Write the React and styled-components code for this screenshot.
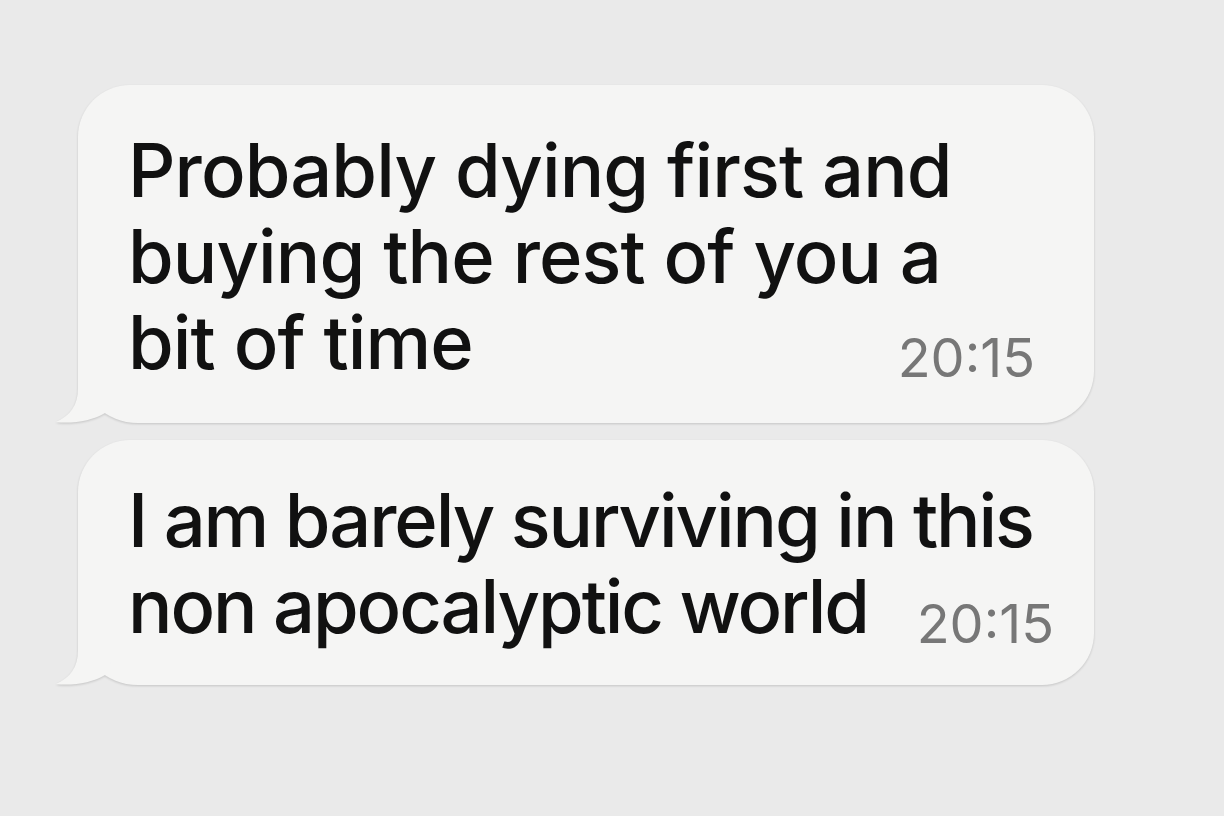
import React from "react";
import styled, { createGlobalStyle } from "styled-components";

const Global = createGlobalStyle`
  html, body { margin: 0; padding: 0; background: #eaeaea; }
  body { font-family: Inter, "Noto Sans", sans-serif; }
`;

const Page = styled.main`
  width: 1224px;
  height: 816px;
  box-sizing: border-box;
  padding: 85px 0 0 78px;
  display: flex;
  flex-direction: column;
  gap: 17px;
  background: #eaeaea;
  overflow: hidden;
`;

const BUBBLE = "#f5f5f4";

const Bubble = styled.div`
  position: relative;
  width: 1016px;
  box-sizing: border-box;
  padding: ${(p) => p.$pt}px 30px ${(p) => p.$pb}px 50px;
  background: ${BUBBLE};
  border-radius: 52px 52px 52px 60px;
  display: grid;
  filter: drop-shadow(0 1px 1px rgba(0, 0, 0, 0.16));
`;

const Text = styled.p`
  grid-area: 1 / 1;
  margin: 0;
  font-size: 74px;
  font-weight: 500;
  line-height: 86px;
  color: #111;
  letter-spacing: ${(p) => p.$tracking}px;
  white-space: nowrap;
`;

const Time = styled.span`
  grid-area: 1 / 1;
  justify-self: end;
  align-self: end;
  margin-right: ${(p) => p.$mr}px;
  margin-bottom: ${(p) => p.$mb}px;
  font-size: 54px;
  line-height: 54px;
  color: #777;
`;

const TailSvg = styled.svg`
  position: absolute;
  left: -22px;
  bottom: 0;
  width: 60px;
  height: 64px;
  overflow: visible;
`;

const Tail = () => (
  <TailSvg viewBox="0 0 60 64">
    <path
      d="M22 0 L22 30 C22 46 14 57 0 63 C16 65 36 62 49 54 L60 30 L22 0 Z"
      fill={BUBBLE}
    />
  </TailSvg>
);

const messages = [
  {
    text: ["Probably dying first and", "buying the rest of you a", "bit of time"],
    time: "20:15",
    pt: 42,
    pb: 38,
    mr: 29,
    mb: 0,
    tracking: -0.9,
  },
  {
    text: ["I am barely surviving in this", "non apocalyptic world"],
    time: "20:15",
    pt: 37,
    pb: 36,
    mr: 10,
    mb: -2,
    tracking: -2.1,
  },
];

export default function App() {
  return (
    <>
      <Global />
      <Page>
        {messages.map((m, i) => (
          <Bubble key={i} $pt={m.pt} $pb={m.pb}>
            <Text $tracking={m.tracking}>
              {m.text.map((l, j) => (
                <React.Fragment key={j}>
                  {l}
                  {j < m.text.length - 1 && <br />}
                </React.Fragment>
              ))}
            </Text>
            <Time $mr={m.mr} $mb={m.mb}>{m.time}</Time>
            <Tail />
          </Bubble>
        ))}
      </Page>
    </>
  );
}
